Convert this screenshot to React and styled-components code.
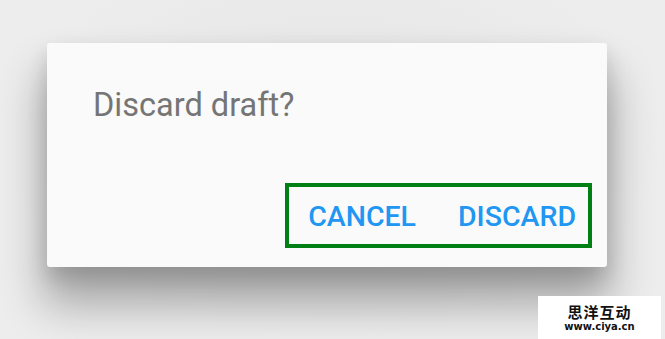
import React from "react";
import styled, { createGlobalStyle } from "styled-components";

const Global = createGlobalStyle`
  html, body {
    margin: 0;
    padding: 0;
    width: 665px;
    height: 339px;
    overflow: hidden;
    background: #ededed;
    font-family: Roboto, "Liberation Sans", sans-serif;
  }
`;

const Page = styled.div`
  position: relative;
  width: 665px;
  height: 339px;
  padding: 43px 0 0 47px;
  box-sizing: border-box;
  background: radial-gradient(ellipse at 50% 40%, #e4e4e4 0%, #ededed 70%);
`;

const Dialog = styled.div`
  width: 560px;
  height: 224px;
  box-sizing: border-box;
  background: #fafafa;
  border-radius: 3px;
  box-shadow: 0 34px 44px 4px rgba(0, 0, 0, 0.3), 0 10px 20px rgba(0, 0, 0, 0.14);
  display: flex;
  flex-direction: column;
  justify-content: space-between;
  padding: 44px 15px 19px 46px;
`;

const Title = styled.h2`
  margin: 0;
  font-size: 32.5px;
  font-weight: 400;
  line-height: 36px;
  color: #757575;
`;

const Actions = styled.div`
  align-self: flex-end;
  display: flex;
  gap: 42px;
  align-items: center;
  height: 65px;
  box-sizing: border-box;
  padding: 2px 12px 0 19px;
  border: 4px solid #007f14;
`;

const Button = styled.button`
  background: none;
  border: none;
  padding: 0;
  font-family: Roboto, "Liberation Sans", sans-serif;
  font-size: 28.5px;
  font-weight: 500;
  color: #2196f3;
  cursor: pointer;
`;

const Watermark = styled.div`
  position: absolute;
  right: 4px;
  bottom: 0;
  width: 123px;
  height: 43px;
  background: #fff;
  display: flex;
  flex-direction: column;
  align-items: center;
  justify-content: center;
  gap: 1px;
  color: #111;
`;

const WmTitle = styled.span`
  font-family: "Noto Sans CJK SC", sans-serif;
  font-weight: 700;
  font-size: 15px;
  line-height: 16px;
  letter-spacing: 1px;
`;

const WmUrl = styled.span`
  font-family: "DejaVu Sans", sans-serif;
  font-weight: 700;
  font-size: 10px;
  line-height: 11px;
`;

export default function App() {
  return (
    <>
      <Global />
      <Page>
        <Dialog>
          <Title>Discard draft?</Title>
          <Actions>
            <Button>CANCEL</Button>
            <Button>DISCARD</Button>
          </Actions>
        </Dialog>
        <Watermark>
          <WmTitle>思洋互动</WmTitle>
          <WmUrl>www.ciya.cn</WmUrl>
        </Watermark>
      </Page>
    </>
  );
}
